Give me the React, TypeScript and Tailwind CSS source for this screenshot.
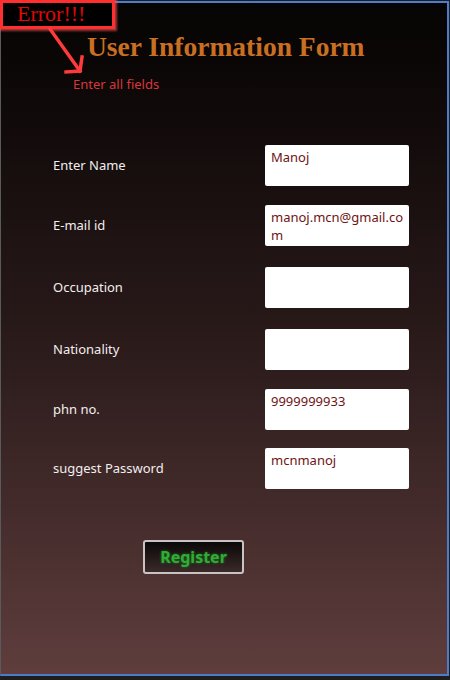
import React from "react";

type Field = {
  label: string;
  value?: React.ReactNode;
  gap: string;
};

const fields: Field[] = [
  { label: "Enter Name", value: "Manoj", gap: "mt-[52px]" },
  {
    label: "E-mail id",
    value: (
      <>
        manoj.mcn@gmail.co
        <br />m
      </>
    ),
    gap: "mt-[19px]",
  },
  { label: "Occupation", gap: "mt-[21px]" },
  { label: "Nationality", gap: "mt-[21px]" },
  { label: "phn no.", value: "9999999933", gap: "mt-[19px]" },
  { label: "suggest Password", value: "mcnmanoj", gap: "mt-[18px]" },
];

const sans = "font-['Noto_Sans','Open_Sans',sans-serif]";
const serif = "font-['Liberation_Serif','Times_New_Roman',serif]";

function FormRow({ label, value, gap }: Field) {
  return (
    <div className={`${gap} flex items-center`}>
      <div className={`w-[264px] pl-[52px] text-[13px] text-[#f2eeee] ${sans}`}>
        {label}
      </div>
      <div
        className={`h-[41px] w-[144px] rounded-[2px] bg-white px-[6px] pt-[3px] text-[13px] leading-[18px] text-[#6e1414] ${sans}`}
      >
        {value}
      </div>
    </div>
  );
}

export default function App() {
  return (
    <div className="relative h-[680px] w-[450px] overflow-hidden bg-[#1e1e1e]">
      <div className="mt-px flex h-[675px] w-[449px] flex-col border-y-2 border-r-2 border-l border-[#4d7cca] border-l-[#5a5a5a] bg-gradient-to-b from-[#060404] via-[#2a1a1a] to-[#5f3d3d]">
        {/* heading */}
        <div className={`pt-[28px] pl-[86px] text-[27.5px] font-bold leading-[31px] text-[#c96f22] ${serif}`}>
          User Information Form
        </div>
        <div className={`mt-[13px] pl-[72px] text-[13px] leading-[18px] text-[#d6383a] ${sans}`}>
          Enter all fields
        </div>

        {fields.map((f) => (
          <FormRow key={f.label} {...f} />
        ))}

        <button
          type="button"
          className={`mt-[51px] ml-[142px] h-[34px] w-[101px] rounded-[3px] border-2 border-[#c9c4c4] bg-gradient-to-b from-[#0c0808] to-[#3c2a2a] text-[16px] font-bold text-[#2fae35] [text-shadow:0_0_3px_#1f7a24] ${sans}`}
        >
          Register
        </button>
      </div>

      {/* error annotation */}
      <div className="absolute top-0 left-0 h-[29px] w-[115px] border-[3px] border-[#ff2f2f] bg-black shadow-[0_0_2px_2px_rgba(255,90,90,0.6)]">
        <div className={`pl-[14px] text-[22px] leading-[22px] text-[#e00808] ${serif}`}>
          Error!!!
        </div>
      </div>
      <svg className="absolute top-0 left-0" width="120" height="90" viewBox="0 0 120 90">
        <g stroke="#ff3a3a" strokeWidth="3.5" strokeLinecap="square" fill="none">
          <path d="M50 29 L80 71" />
          <path d="M66 72 L80 71 L82 57" />
        </g>
      </svg>
    </div>
  );
}
